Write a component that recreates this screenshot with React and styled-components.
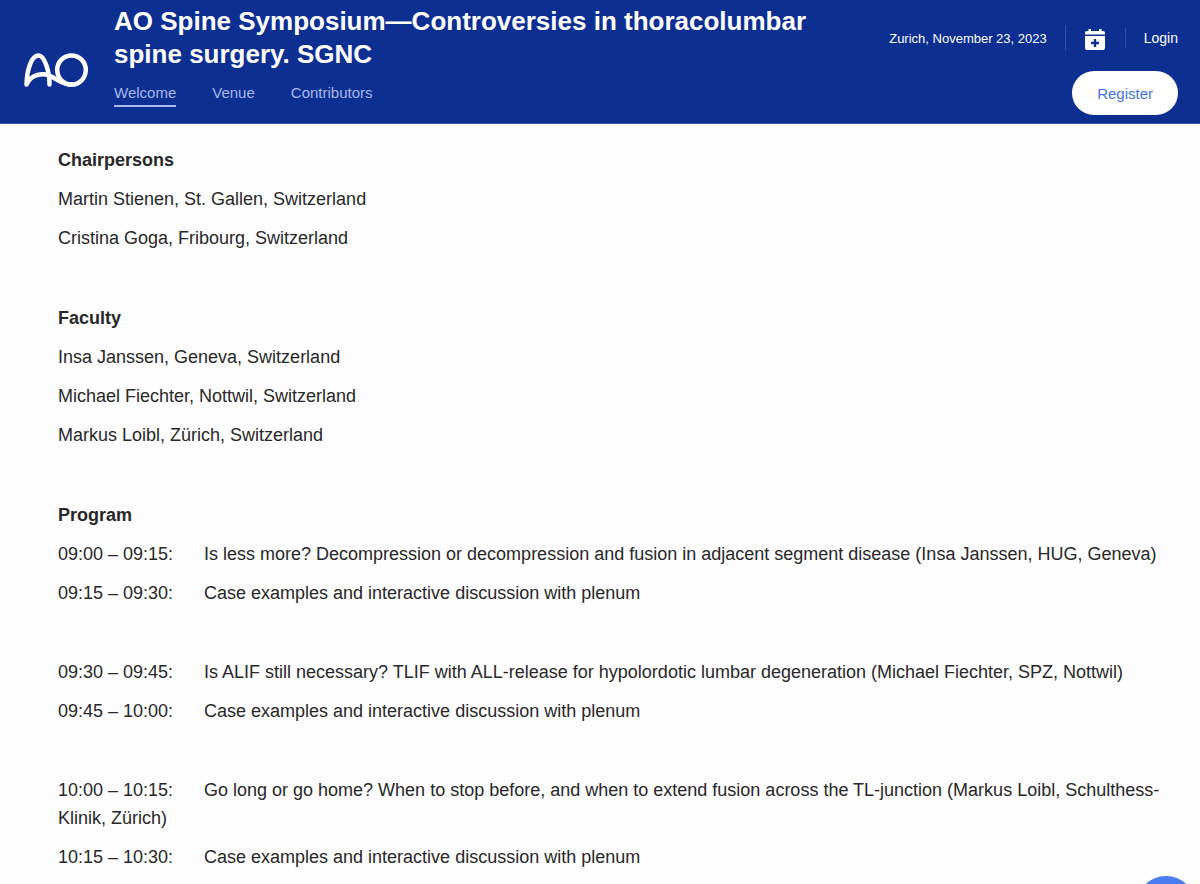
import styled, { createGlobalStyle } from 'styled-components';

const GlobalStyle = createGlobalStyle`
  * {
    box-sizing: border-box;
  }

  body {
    margin: 0;
    background-color: #fdfdfd;
    color: #282828;
    font-family: 'Liberation Sans', Arial, sans-serif;
  }
`;

const Header = styled.header`
  display: flex;
  gap: 24px;
  min-height: 124px;
  padding: 5px 22px 8px 22px;
  background-color: #0d2f92;
  border-bottom: 1px solid #3a56a8;
  color: #fff;
`;

const LogoLink = styled.a`
  display: flex;
  align-items: center;
  padding-top: 20px;

  svg {
    display: block;
  }
`;

const Heading = styled.div`
  flex: 1;
`;

const Title = styled.h1`
  max-width: 720px;
  margin: 0;
  font-size: 26px;
  line-height: 33px;
`;

const Nav = styled.nav`
  display: flex;
  gap: 36px;
  margin-top: 13px;
`;

const NavLink = styled.a`
  padding-bottom: 3px;
  border-bottom: 2px solid ${props => (props.$active ? '#a9b8ea' : 'transparent')};
  color: #a9b8ea;
  font-size: 15px;
  line-height: 18px;
  text-decoration: none;
`;

const Actions = styled.div`
  display: flex;
  flex-direction: column;
  align-items: flex-end;
  justify-content: space-between;
`;

const Meta = styled.div`
  display: flex;
  align-items: center;
  padding-top: 20px;
  font-size: 13px;
`;

const Divider = styled.span`
  width: 1px;
  height: ${props => props.$height};
  margin: 0 18px;
  background-color: #2e4fa8;
`;

const CalendarButton = styled.button`
  display: flex;
  padding: 3px 2px 0 1px;
  border: 0;
  background: none;
  color: #fff;
  cursor: pointer;
`;

const LoginLink = styled.a`
  color: #fff;
  font-size: 14px;
  text-decoration: none;
`;

const RegisterButton = styled.button`
  height: 44px;
  padding: 0 25px;
  border: 0;
  border-radius: 22px;
  background-color: #fff;
  color: #3f74e0;
  font-family: inherit;
  font-size: 15px;
  cursor: pointer;
`;

const Content = styled.main`
  padding: 22px 36px 0 58px;
  font-size: 18px;
  line-height: 28px;
`;

const Section = styled.section`
  & + & {
    margin-top: 52px;
  }
`;

const SectionTitle = styled.h2`
  margin: 0 0 11px;
  font-size: 18px;
  line-height: 28px;
`;

const Line = styled.p`
  margin: 0 0 11px;

  &:last-child {
    margin-bottom: 0;
  }
`;

const Slot = styled.div`
  & + & {
    margin-top: 51px;
  }
`;

const Time = styled.span`
  display: inline-block;
  width: 146px;
`;

const ChatButton = styled.button`
  position: fixed;
  right: 4px;
  bottom: -52px;
  width: 60px;
  height: 60px;
  border: 0;
  border-radius: 50%;
  background-color: #4a7df0;
  cursor: pointer;
`;

const navItems = ['Welcome', 'Venue', 'Contributors'];

const people = [
  {
    title: 'Chairpersons',
    names: [
      'Martin Stienen, St. Gallen, Switzerland',
      'Cristina Goga, Fribourg, Switzerland',
    ],
  },
  {
    title: 'Faculty',
    names: [
      'Insa Janssen, Geneva, Switzerland',
      'Michael Fiechter, Nottwil, Switzerland',
      'Markus Loibl, Zürich, Switzerland',
    ],
  },
];

const cases = 'Case examples and interactive discussion with plenum';

const program = [
  [
    ['09:00 – 09:15:', 'Is less more? Decompression or decompression and fusion in adjacent segment disease (Insa Janssen, HUG, Geneva)'],
    ['09:15 – 09:30:', cases],
  ],
  [
    ['09:30 – 09:45:', 'Is ALIF still necessary? TLIF with ALL-release for hypolordotic lumbar degeneration (Michael Fiechter, SPZ, Nottwil)'],
    ['09:45 – 10:00:', cases],
  ],
  [
    ['10:00 – 10:15:', 'Go long or go home? When to stop before, and when to extend fusion across the TL-junction (Markus Loibl, Schulthess-Klinik, Zürich)'],
    ['10:15 – 10:30:', cases],
  ],
];

const Logo = () => (
  <svg width='68' height='40' viewBox='0 0 68 40' fill='none' stroke='#fff' strokeWidth='4.5' strokeLinecap='round' strokeLinejoin='round'>
    <path d='M27.5 34.5C27.5 21 22.5 5.5 16.5 5.5C10 5.5 5 18 4.5 34.5C8 26.500 16 23 24 24.500C33 26.500 38 34.500 49.500 34.500' />
    <ellipse cx='49.5' cy='20' rx='14.3' ry='14.6' />
  </svg>
);

const CalendarIcon = () => (
  <svg width='20' height='22' viewBox='0 0 20 22' fill='currentColor'>
    <path d='M3.5 0h2.500v2H14V0H16.500v2h1.500a2 2 0 0 1 2 2v1.500H0V4a2 2 0 0 1 2-2h1.500z' />
    <path fillRule='evenodd' d='M0 7h20v12a2 2 0 0 1-2 2H2a2 2 0 0 1-2-2zM8.800 10v2.800H6v2.400h2.800V18h2.400v-2.800H14v-2.400h-2.800V10z' />
  </svg>
);

const App = () => (
  <>
    <GlobalStyle />
    <Header>
      <LogoLink href='#' aria-label='AO'>
        <Logo />
      </LogoLink>
      <Heading>
        <Title>AO Spine Symposium—Controversies in thoracolumbar spine surgery. SGNC</Title>
        <Nav>
          {navItems.map((item, i) => (
            <NavLink key={item} href='#' $active={i === 0}>{item}</NavLink>
          ))}
        </Nav>
      </Heading>
      <Actions>
        <Meta>
          <span>Zurich, November 23, 2023</span>
          <Divider $height='26px' />
          <CalendarButton aria-label='Add to calendar'>
            <CalendarIcon />
          </CalendarButton>
          <Divider $height='20px' />
          <LoginLink href='#'>Login</LoginLink>
        </Meta>
        <RegisterButton>Register</RegisterButton>
      </Actions>
    </Header>
    <Content>
      {people.map(group => (
        <Section key={group.title}>
          <SectionTitle>{group.title}</SectionTitle>
          {group.names.map(name => (
            <Line key={name}>{name}</Line>
          ))}
        </Section>
      ))}
      <Section>
        <SectionTitle>Program</SectionTitle>
        {program.map(slot => (
          <Slot key={slot[0][0]}>
            {slot.map(([time, text]) => (
              <Line key={time}>
                <Time>{time}</Time>
                {text}
              </Line>
            ))}
          </Slot>
        ))}
      </Section>
    </Content>
    <ChatButton aria-label='Open chat' />
  </>
);

export default App;
